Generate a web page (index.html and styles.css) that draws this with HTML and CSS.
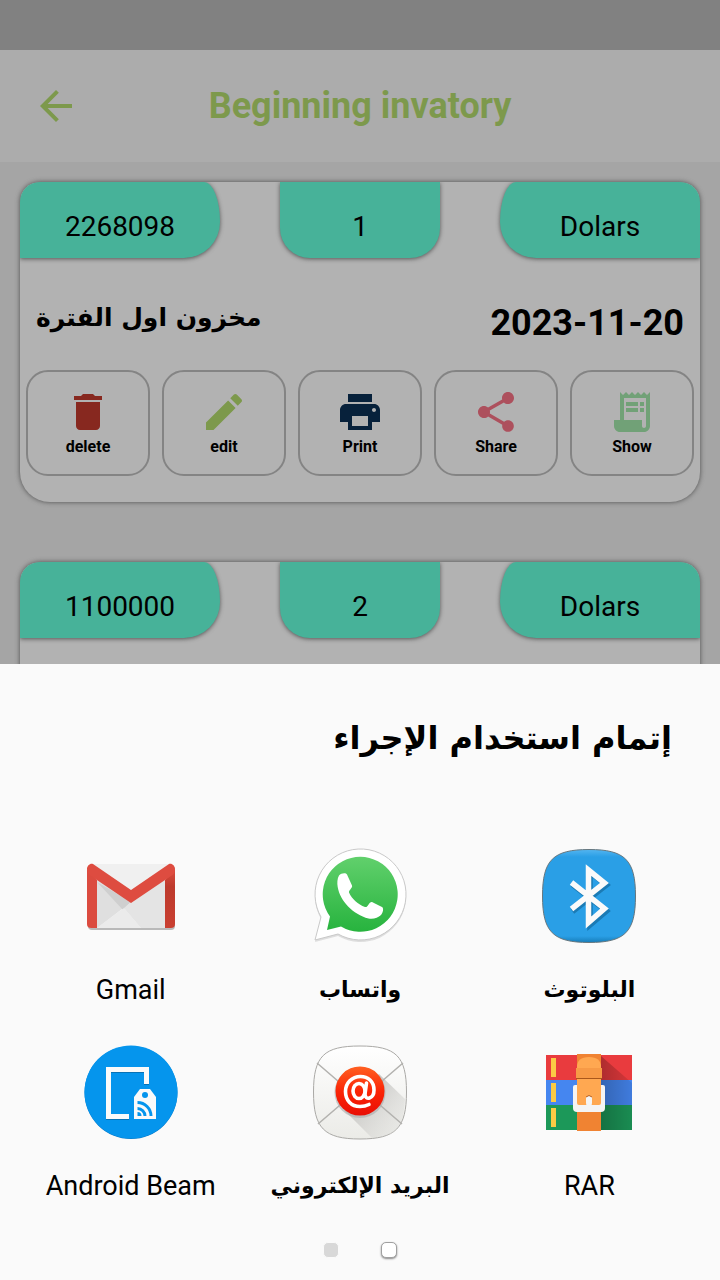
FILE: index.html
```html
<!DOCTYPE html>
<html lang="en">
<head>
<meta charset="utf-8">
<meta name="viewport" content="width=device-width, initial-scale=1">
<title>Beginning invatory</title>
<link rel="stylesheet" href="styles.css">
</head>
<body>
<div class="screen">
  <div class="backdrop">
    <div class="status-bar"></div>
    <header class="app-bar">
      <button class="back" type="button" aria-label="Back">
        <svg class="icon" viewBox="0 0 24 24"><path d="M20 11H7.83l5.59-5.59L12 4l-8 8 8 8 1.41-1.41L7.83 13H20v-2z"/></svg>
      </button>
      <h1 class="app-title">Beginning invatory</h1>
    </header>
    <main class="list">
      <article class="card">
        <div class="tabs">
          <span class="tab tab-start">2268098</span>
          <span class="tab tab-middle">1</span>
          <span class="tab tab-end">Dolars</span>
        </div>
        <div class="summary">
          <h2 class="kind" lang="ar" dir="rtl">مخزون اول الفترة</h2>
          <time class="date" datetime="2023-11-20">2023-11-20</time>
        </div>
        <div class="actions">
          <button class="action" type="button">
            <svg class="icon red" viewBox="0 0 24 24"><path d="M6 19c0 1.1.9 2 2 2h8c1.1 0 2-.9 2-2V7H6v12zM19 4h-3.5l-1-1h-5l-1 1H5v2h14V4z"/></svg>
            <span>delete</span>
          </button>
          <button class="action" type="button">
            <svg class="icon green" viewBox="0 0 24 24"><path d="M3 17.25V21h3.75L17.81 9.94l-3.75-3.75L3 17.25zM20.71 7.04c.39-.39.39-1.02 0-1.41l-2.34-2.34a1 1 0 0 0-1.41 0l-1.83 1.83 3.75 3.75 1.83-1.83z"/></svg>
            <span>edit</span>
          </button>
          <button class="action" type="button">
            <svg class="icon navy" viewBox="0 0 24 24"><path d="M19 8H5c-1.66 0-3 1.34-3 3v6h4v4h12v-4h4v-6c0-1.66-1.34-3-3-3zm-3 11H8v-5h8v5zm3-7c-.55 0-1-.45-1-1s.45-1 1-1 1 .45 1 1-.45 1-1 1zm-1-9H6v4h12V3z"/></svg>
            <span>Print</span>
          </button>
          <button class="action" type="button">
            <svg class="icon pink" viewBox="0 0 24 24"><path d="M18 16.08c-.76 0-1.44.3-1.96.77L8.91 12.7c.05-.23.09-.46.09-.7s-.04-.47-.09-.7l7.05-4.11c.54.5 1.25.81 2.04.81 1.66 0 3-1.34 3-3s-1.34-3-3-3-3 1.34-3 3c0 .24.04.47.09.7L8.04 9.81C7.5 9.31 6.79 9 6 9c-1.66 0-3 1.34-3 3s1.34 3 3 3c.79 0 1.5-.31 2.04-.81l7.12 4.16c-.05.21-.08.43-.08.65 0 1.61 1.31 2.92 2.92 2.92s2.92-1.31 2.92-2.92-1.31-2.92-2.92-2.92z"/></svg>
            <span>Share</span>
          </button>
          <button class="action" type="button">
            <svg class="icon mint" viewBox="0 0 24 24"><path d="M19.5 3.5L18 2l-1.5 1.5L15 2l-1.5 1.5L12 2l-1.5 1.5L9 2 7.5 3.5 6 2v14H3v3c0 1.66 1.34 3 3 3h12c1.66 0 3-1.34 3-3V2l-1.5 1.5zM19 19c0 .55-.45 1-1 1s-1-.45-1-1v-3H8V5h11v14z"/><path d="M9 7h6v2H9zM16 7h2v2h-2zM9 10h6v2H9zM16 10h2v2h-2z"/></svg>
            <span>Show</span>
          </button>
        </div>
      </article>
      <article class="card">
        <div class="tabs">
          <span class="tab tab-start">1100000</span>
          <span class="tab tab-middle">2</span>
          <span class="tab tab-end">Dolars</span>
        </div>
      </article>
    </main>
  </div>

  <section class="sheet" lang="ar" dir="rtl" aria-labelledby="sheet-title">
    <h2 class="sheet-title" id="sheet-title">إتمام استخدام الإجراء</h2>
    <div class="apps">
      <button class="app" type="button">
        <svg class="logo" viewBox="0 0 96 96">
          <defs><linearGradient id="bt" x1="0" y1="0" x2="0" y2="1"><stop offset="0" stop-color="#54b5f0"/><stop offset=".08" stop-color="#2a9fe6"/><stop offset=".93" stop-color="#2a9fe6"/><stop offset="1" stop-color="#167db9"/></linearGradient></defs>
          <path d="M48 1.500C84 1.500 94.500 12 94.500 48S84 94.500 48 94.500 1.500 84 1.500 48 12 1.500 48 1.500z" fill="url(#bt)" stroke="#66777f"/>
          <path d="M30.500 34.500l34 26.500-16.500 14V22l16.500 13-34 26.500" transform="translate(1 2)" fill="none" stroke="#1b7bb5" stroke-width="5.500"/>
          <path d="M30.500 34.500l33 26-16 14V22l16 13-33 26" fill="none" stroke="#fafafa" stroke-width="5.500"/>
        </svg>
        <span class="app-name">البلوتوث</span>
      </button>
      <button class="app" type="button">
        <svg class="logo" viewBox="0 0 96 96">
          <defs><linearGradient id="wa" x1="0" y1="0" x2="0" y2="1"><stop offset="0" stop-color="#61d06c"/><stop offset="1" stop-color="#27b33e"/></linearGradient></defs>
          <path d="M3 93l6-23A45.500 45.500 0 1 1 26 87z" fill="#aaa" opacity=".35" transform="translate(0 1)"/>
          <path d="M3 92l6-23A45.500 45.500 0 1 1 26 86z" fill="#fff" stroke="#c9c9c9"/>
          <path d="M14 82l3-13.500A37.500 37.500 0 1 1 28 78.500z" fill="url(#wa)" transform="translate(1 0)"/>
          <path d="M27 27.500c2-2.500 7-3 8-1l5 11c1 2-3.500 5-3 7 3 6.500 9 12 16 14.500 3 1 4-5.500 7-5l10 5c2 1 1 6-1 8-3 3-8 4.500-12.500 3.500C41 66.500 28 53 25.700 39c-.7-4-.5-8.500 1.300-11.500z" fill="#fff"/>
        </svg>
        <span class="app-name">واتساب</span>
      </button>
      <button class="app" type="button">
        <svg class="logo" viewBox="0 0 96 96">
          <defs><linearGradient id="gr" x1="0" y1="0" x2="0" y2="1"><stop offset="0" stop-color="#db4b3f"/><stop offset=".3" stop-color="#bd3a2c"/><stop offset="1" stop-color="#c93f31"/></linearGradient></defs>
          <rect x="5" y="18" width="87" height="64" rx="4" fill="#b9b9b9"/>
          <rect x="5" y="16" width="86" height="64" rx="4" fill="#f0f0f0"/>
          <path d="M14 32l34 22-34 26z" fill="#dfdfdf"/>
          <path d="M14 34l34 20-8 8z" fill="#cfcfcf"/>
          <path d="M48 54l34-22v48H58L41 60z" fill="#e4e4e4"/>
          <path d="M41 60l17 20H14z" fill="#ebebeb"/>
          <path d="M4 21v55a4 4 0 0 0 4 4h6V32z" fill="#db4b3f"/>
          <path d="M92 21v55a4 4 0 0 1-4 4h-6V32z" fill="url(#gr)"/>
          <path d="M10 16l38 26 38-26c3-1 6 2 6 5 0 4-2 6-4 7L48 55 8 28c-2-1-4-3-4-7 0-3 3-6 6-5z" fill="#de4c40"/>
        </svg>
        <span class="app-name latin">Gmail</span>
      </button>
      <button class="app" type="button">
        <svg class="logo" viewBox="0 0 96 96">
          <defs><linearGradient id="sh" x1="0" y1="0" x2="1" y2="0"><stop offset="0" stop-opacity=".25"/><stop offset="1" stop-opacity=".08"/></linearGradient></defs>
          <path fill="#e93b3e" d="M5 11h86v25H5z"/><path fill="#4586f0" d="M5 36h86v25H5z"/><path fill="#1c9859" d="M5 61h86v25H5z"/>
          <path d="M60 12l31 27v47H60z" fill="url(#sh)"/>
          <path d="M10 14h5v19h-5zM10 39h5v19h-5zM10 64h5v19h-5z" fill="#fbcb45"/>
          <path d="M36 10h24v77H36z" fill="#f08332"/>
          <path d="M34 41h28q2 0 2 2v21q0 4-4 4H36q-4 0-4-4V43q0-2 2-2z" fill="#f4f4f4"/>
          <path d="M36 26v-3q0-10 12-10t12 10v36q0 2-2 2H38q-2 0-2-2z" fill="#ffa851"/>
          <path d="M35 24h26v10H35z" fill="#f79a46"/><path d="M35 34h26v1H35z" fill="#a9571b"/>
          <path d="M45 53q3-3 6 0v6l-1 5h-4l-1-5z" fill="#f4f4f4"/><path d="M45 53q3-3 6 0" fill="none" stroke="#b65a18"/>
        </svg>
        <span class="app-name latin">RAR</span>
      </button>
      <button class="app" type="button">
        <svg class="logo" viewBox="0 0 96 96">
          <defs>
            <linearGradient id="em" x1="0" y1="0" x2="0" y2="1"><stop offset="0" stop-color="#fff"/><stop offset="1" stop-color="#ebebe7"/></linearGradient>
            <linearGradient id="rd" x1="0" y1="0" x2="0" y2="1"><stop offset="0" stop-color="#ff6021"/><stop offset=".5" stop-color="#fb2506"/><stop offset="1" stop-color="#e90e05"/></linearGradient>
            <linearGradient id="fd" x1="0" y1="0" x2="1" y2="1"><stop offset=".3" stop-color="#bcbbb8" stop-opacity=".8"/><stop offset="1" stop-color="#e0e0dd" stop-opacity=".2"/></linearGradient>
          </defs>
          <path d="M48 2C84 2 94.500 12 94.500 48S84 95 48 95 1.500 84 1.500 48 12 2 48 2z" fill="url(#em)" stroke="#aaa9a6"/>
          <path d="M67 30l26 25c-1 18-4 29-14 35l-19 4-28-28z" fill="url(#fd)"/>
          <path d="M5 19l43 37 43-37M6 80l42-36 42 36" fill="none" stroke="#b3b2af" stroke-width="1.500"/>
          <circle cx="48" cy="48.500" r="25.500" fill="#aaa" opacity=".6"/>
          <circle cx="48" cy="47" r="24.500" fill="url(#rd)"/>
          <g fill="none" stroke="#fff" stroke-width="3.600" stroke-linecap="round">
            <ellipse cx="47" cy="47" rx="6" ry="7.500"/>
            <path d="M54.500 39l-1.500 11c0 7 9 5 9-4C62 37.500 56 32.500 48.500 32.500 40 32.500 33.500 39 33.500 47.500S39 62.500 48 62.500c4 0 7-1 9-2"/>
          </g>
        </svg>
        <span class="app-name">البريد الإلكتروني</span>
      </button>
      <button class="app" type="button">
        <svg class="logo" viewBox="0 0 96 96">
          <circle cx="48" cy="48.500" r="46.500" fill="#0878c5"/><circle cx="48" cy="48" r="46.500" fill="#0595ed"/>
          <path d="M46 72.500H25.500v-47h38V40" fill="none" stroke="#0872b5" stroke-width="5" transform="translate(0 1)"/>
          <path d="M46 72.500H25.500v-47h38V40" fill="none" stroke="#fafafa" stroke-width="5"/>
          <path d="M57 45h10l6 8v22H51V53z" fill="#fafafa"/>
          <circle cx="62" cy="51" r="3" fill="#0595ed"/>
          <path d="M54.500 72v-4a4 4 0 0 1 4 4z" fill="#0595ed"/>
          <path d="M54.500 64.500a7.500 7.500 0 0 1 7.500 7.500M54.500 58.500a13.500 13.500 0 0 1 13.500 13.500" fill="none" stroke="#0595ed" stroke-width="3"/>
        </svg>
        <span class="app-name latin" dir="ltr">Android Beam</span>
      </button>
    </div>
    <div class="pager">
      <button class="dot dot-active" type="button" aria-label="1"></button>
      <button class="dot" type="button" aria-label="2"></button>
    </div>
  </section>
</div>
</body>
</html>
```

FILE: styles.css
```css
* { box-sizing: border-box; }

body {
  margin: 0;
  background: #a5a5a5;
  color: #000;
  font-family: Roboto, "DejaVu Sans", sans-serif;
}

h1, h2 { margin: 0; }

button {
  margin: 0;
  padding: 0;
  border: 0;
  background: none;
  color: inherit;
  font: inherit;
}

.screen {
  display: flex;
  flex-direction: column;
  height: 100vh;
}

.backdrop {
  flex: 1;
  min-height: 0;
  overflow: hidden;
}

.status-bar {
  height: 50px;
  background: #818181;
}

.app-bar {
  display: grid;
  grid-template-columns: 48px 1fr 48px;
  align-items: center;
  height: 112px;
  padding: 0 32px;
  background: #acacac;
  color: #7d994c;
}

.back { display: flex; }

.app-title {
  font-size: 36px;
  line-height: 46px;
  text-align: center;
}

.icon {
  display: block;
  width: 48px;
  height: 48px;
  fill: currentColor;
}

.list {
  display: grid;
  gap: 60px;
  padding: 20px;
}

.card {
  overflow: hidden;
  min-height: 320px;
  padding-bottom: 26px;
  border-radius: 20px 20px 30px 30px;
  background: #b2b2b2;
  box-shadow: 0 0 5px #4c4c4c;
}

.tabs {
  display: grid;
  grid-template-columns: 200px 160px 200px;
  justify-content: space-between;
}

.tab {
  height: 76px;
  padding-top: 28px;
  background: #47b299;
  box-shadow: 0 1px 4px #555;
  font-size: 28px;
  line-height: 34px;
  text-align: center;
}

.tab-start { border-radius: 0 16px 36px 0 / 0 40px 36px 0; }
.tab-middle { border-radius: 0 0 30px 30px; }
.tab-end { border-radius: 16px 0 0 36px / 40px 0 0 36px; }

.summary {
  display: flex;
  align-items: center;
  justify-content: space-between;
  height: 112px;
  padding: 18px 16px 0;
}

.kind {
  padding-bottom: 10px;
  font-family: "DejaVu Sans", sans-serif;
  font-size: 25px;
  line-height: 44px;
}

.date {
  font-size: 36px;
  font-weight: 700;
  line-height: 44px;
}

.actions {
  display: flex;
  gap: 12px;
  padding: 0 6px;
}

.action {
  display: flex;
  flex: 1;
  flex-direction: column;
  align-items: center;
  height: 106px;
  padding-top: 16px;
  border: 2px solid #848484;
  border-radius: 22px;
  font-size: 16px;
  font-weight: 700;
  line-height: 22px;
}

.red { color: #87281f; }
.green { color: #7d994c; }
.navy { color: #07213b; }
.pink { color: #ad505d; }
.mint { color: #71a177; }

.sheet {
  padding: 44px 16px 21px;
  background: #fafafa;
}

.sheet-title {
  height: 140px;
  padding: 0 32px;
  font-family: "DejaVu Sans", sans-serif;
  font-size: 32px;
  line-height: 60px;
}

.apps {
  display: grid;
  grid-template-columns: repeat(3, 1fr);
  row-gap: 38px;
}

.app {
  display: flex;
  flex-direction: column;
  align-items: center;
  gap: 30px;
}

.logo {
  display: block;
  width: 96px;
  height: 96px;
}

.app-name {
  font-family: "DejaVu Sans", sans-serif;
  font-size: 22px;
  font-weight: 700;
  line-height: 32px;
  white-space: nowrap;
}

.latin {
  font-family: Roboto, sans-serif;
  font-size: 27px;
  font-weight: 400;
}

.pager {
  display: flex;
  align-items: center;
  justify-content: center;
  gap: 42px;
  height: 18px;
  margin-top: 39px;
}

.dot {
  width: 16px;
  height: 16px;
  border: 1px solid #fafafa;
  border-radius: 5px;
  background: #d8d8d8;
}

.dot-active {
  border-color: #a0a0a0;
  background: #fff;
  box-shadow: 0 1px 2px #888;
}
```
